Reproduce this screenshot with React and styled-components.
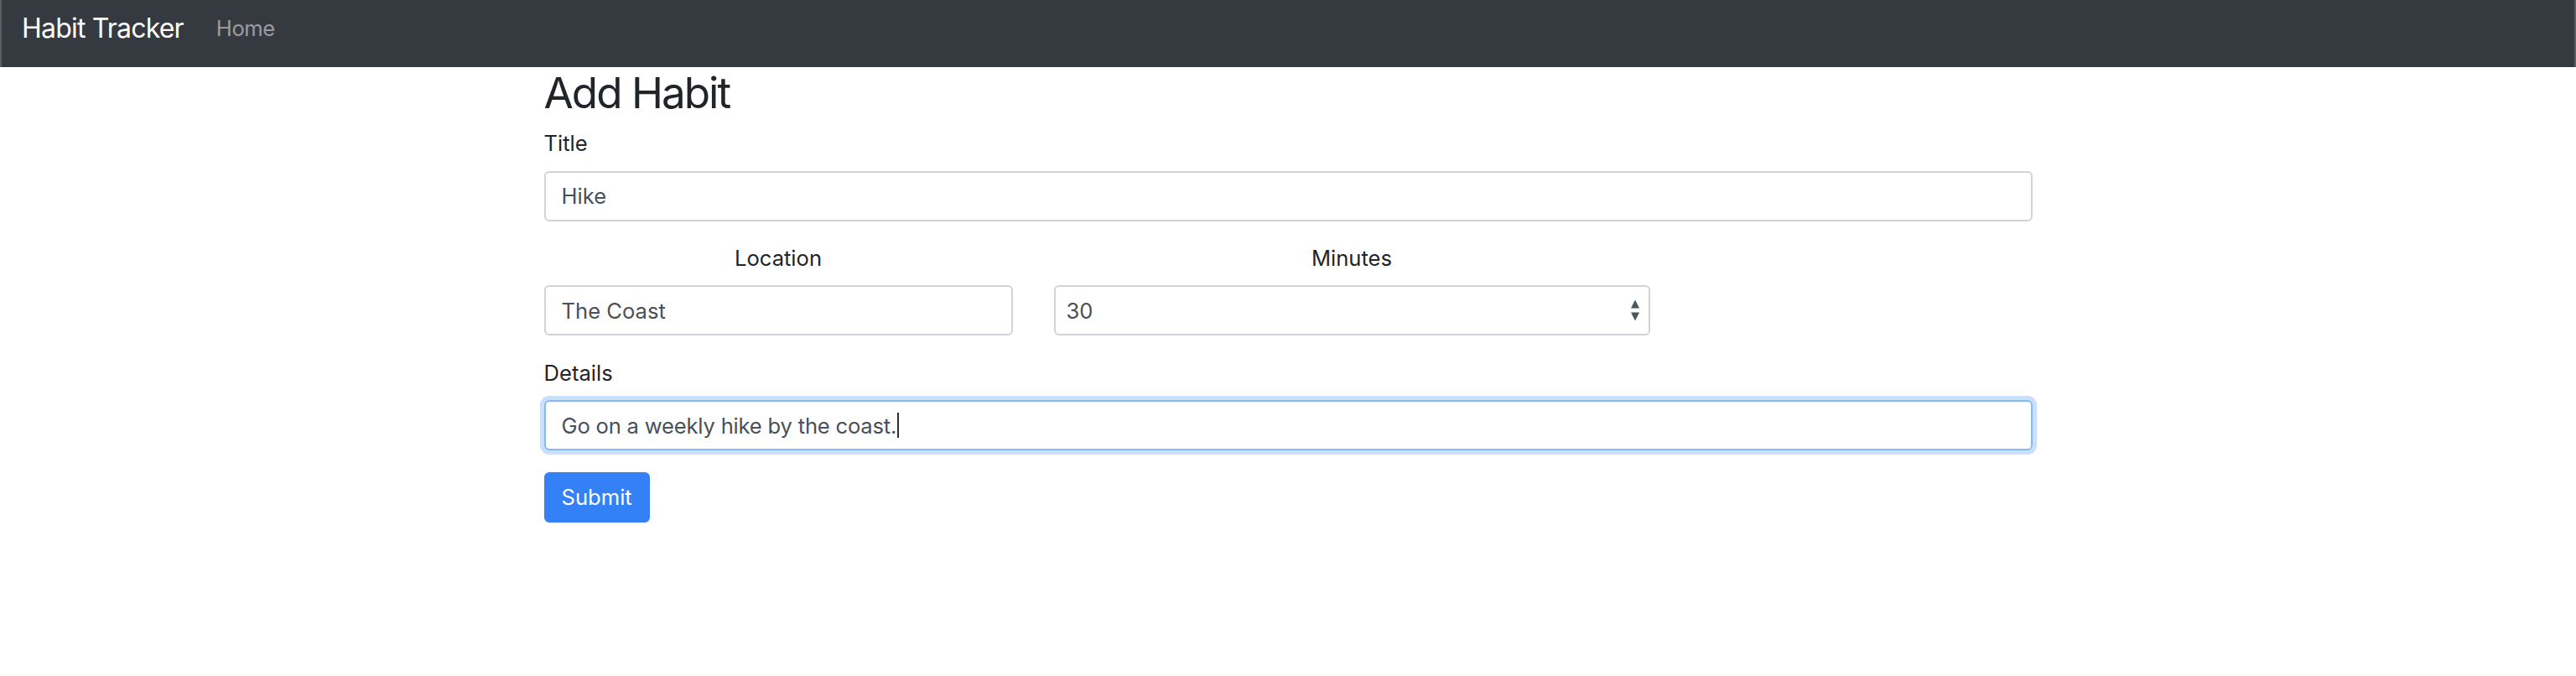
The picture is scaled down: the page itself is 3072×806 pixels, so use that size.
import React from "react";
import styled, { createGlobalStyle } from "styled-components";

const GlobalStyle = createGlobalStyle`
  body {
    margin: 0;
    background: #fff;
    font-family: Inter, "Noto Sans", sans-serif;
    color: #212529;
  }
`;

const Navbar = styled.nav`
  height: 80px;
  box-sizing: border-box;
  display: flex;
  align-items: center;
  padding: 0 24px 12px;
  background-color: #353a41;
  border-left: 2px solid #5b5f65;
  border-right: 2px solid #5b5f65;
`;

const Brand = styled.a`
  font-size: 32px;
  line-height: 48px;
  letter-spacing: -0.8px;
  color: #fff;
  margin-right: 26px;
  text-decoration: none;
`;

const NavLink = styled.a`
  font-size: 25.6px;
  line-height: 38.4px;
  letter-spacing: -0.5px;
  padding: 0 13px;
  color: rgba(255, 255, 255, 0.5);
  text-decoration: none;
`;

const Container = styled.div`
  width: 1775px;
  margin: 0 auto;
`;

const Heading = styled.h2`
  font-size: 51.2px;
  font-weight: 400;
  line-height: 1.2;
  letter-spacing: -2px;
  margin: 0 0 11px;
`;

const FormGroup = styled.div`
  margin-bottom: 25.6px;
`;

const Row = styled.div`
  display: grid;
  grid-template-columns: repeat(12, 1fr);
  column-gap: 49px;
`;

const Col = styled.div`
  grid-column: span ${(p) => p.span};
  margin-bottom: 25.6px;
`;

const Label = styled.label`
  display: block;
  font-size: 25.6px;
  line-height: 38.4px;
  margin-bottom: 12.8px;
  text-align: ${(p) => (p.center ? "center" : "left")};
`;

const Input = styled.input`
  display: block;
  width: 100%;
  height: 60px;
  box-sizing: border-box;
  padding: 0 19px;
  font-family: inherit;
  font-size: 25.6px;
  color: #495057;
  background: #fff;
  border: 2px solid #ced4da;
  border-radius: 6px;
  outline: none;
`;

const FocusedField = styled.div`
  display: flex;
  align-items: center;
  width: 100%;
  height: 60px;
  box-sizing: border-box;
  padding: 0 19px;
  font-size: 25.6px;
  letter-spacing: -0.2px;
  color: #495057;
  border: 2px solid #86b7f7;
  border-radius: 6px;
  box-shadow: 0 0 0 5px #cadffc;
`;

const Caret = styled.span`
  display: inline-block;
  width: 2px;
  height: 30px;
  margin-left: 1px;
  background: #2b2f33;
`;

const SelectWrap = styled.div`
  position: relative;
`;

const Select = styled.select`
  display: block;
  width: 100%;
  height: 60px;
  box-sizing: border-box;
  padding: 0 13px;
  font-family: inherit;
  font-size: 25.6px;
  color: #495057;
  background: #fff;
  border: 2px solid #ced4da;
  border-radius: 6px;
  appearance: none;
  outline: none;
`;

const Arrows = styled.svg`
  position: absolute;
  right: 13px;
  top: 50%;
  transform: translateY(-50%);
  pointer-events: none;
`;

const Button = styled.button`
  height: 60px;
  padding: 0 19px;
  font-family: inherit;
  font-size: 25.6px;
  color: #fff;
  background-color: #3480f7;
  border: 2px solid #3480f7;
  border-radius: 6px;
  cursor: pointer;
`;

export default function App() {
  return (
    <>
      <GlobalStyle />
      <Navbar>
        <Brand href="#">Habit Tracker</Brand>
        <NavLink href="#">Home</NavLink>
      </Navbar>
      <Container>
        <Heading>Add Habit</Heading>
        <FormGroup>
          <Label>Title</Label>
          <Input type="text" defaultValue="Hike" />
        </FormGroup>
        <Row>
          <Col span={4}>
            <Label center>Location</Label>
            <Input type="text" defaultValue="The Coast" />
          </Col>
          <Col span={5}>
            <Label center>Minutes</Label>
            <SelectWrap>
              <Select defaultValue="30">
                <option value="15">15</option>
                <option value="30">30</option>
                <option value="45">45</option>
                <option value="60">60</option>
              </Select>
              <Arrows width="10" height="25" viewBox="0 0 10 25">
                <path d="M5 0 L10 10 L0 10 Z" fill="#4f5459" />
                <path d="M0 15 L10 15 L5 25 Z" fill="#4f5459" />
              </Arrows>
            </SelectWrap>
          </Col>
        </Row>
        <FormGroup>
          <Label>Details</Label>
          <FocusedField>
            Go on a weekly hike by the coast.
            <Caret />
          </FocusedField>
        </FormGroup>
        <Button type="submit">Submit</Button>
      </Container>
    </>
  );
}
